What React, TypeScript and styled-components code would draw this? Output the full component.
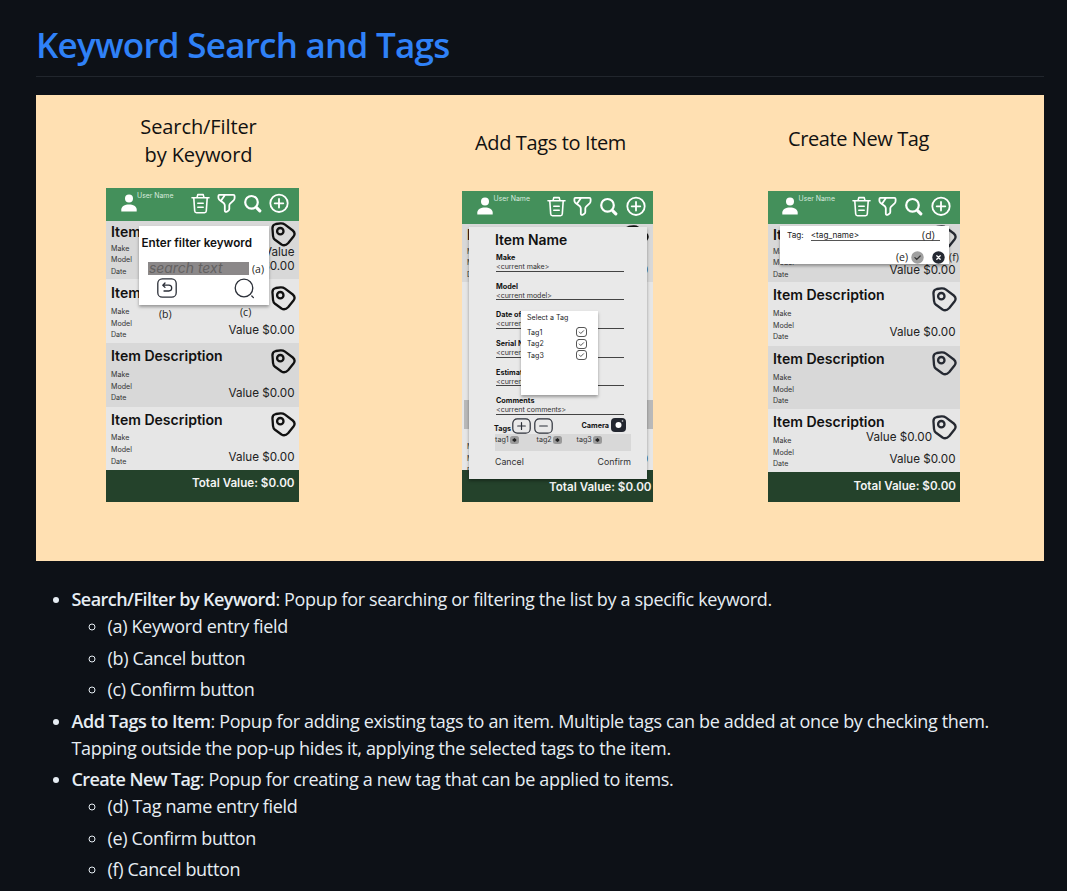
import React from "react";
import styled, { createGlobalStyle } from "styled-components";

const GlobalStyle = createGlobalStyle`
  * { box-sizing: border-box; }
  body {
    margin: 0;
    background: #0d1117;
    color: #e6edf3;
    font: 18px/27px "Segoe UI", "Open Sans", "Noto Sans", sans-serif;
    overflow: hidden;
  }
  svg { flex: none; }
`;

const Page = styled.main`
  width: 1067px;
  height: 891px;
  overflow: hidden;
  padding: 22px 23px 0 36px;
`;

const Heading = styled.h1`
  margin: 0 0 18px;
  height: 55px;
  border-bottom: 1px solid #21262d;
  color: #2f81f7;
  font-size: 35px;
  font-weight: 600;
  line-height: 45px;
  letter-spacing: -0.74px;
  white-space: nowrap;
`;

const Figure = styled.figure`
  margin: 0 0 25px;
  height: 466px;
  padding-left: 70px;
  background: #ffe0b2;
  color: #111;
  display: flex;
  align-items: flex-start;
`;

const Column = styled.div<{ $w: number; $gap: number }>`
  width: ${(p) => p.$w}px;
  margin-right: ${(p) => p.$gap}px;
  flex: none;
`;

const Caption = styled.figcaption<{ $h: number; $top: number; $shift: number; $ls: number }>`
  height: ${(p) => p.$h}px;
  padding-top: ${(p) => p.$top}px;
  padding-right: ${(p) => p.$shift}px;
  font-size: 20px;
  line-height: 27.5px;
  letter-spacing: ${(p) => p.$ls}px;
  text-align: center;
  white-space: nowrap;
`;

const Phone = styled.div<{ $h: number }>`
  position: relative;
  height: ${(p) => p.$h}px;
  background: #e6e6e6;
  font-family: Inter, sans-serif;
  display: flex;
  flex-direction: column;
`;

const AppBar = styled.div<{ $pad: number }>`
  height: 32.5px;
  flex: none;
  padding: 5px 0 0 ${(p) => p.$pad}px;
  background: #44905b;
  color: #fff;
  display: flex;
  align-items: flex-start;
`;

const UserName = styled.span`
  width: 54px;
  margin: -2px 0 0 0.5px;
  font-size: 6.9px;
  line-height: 9px;
  color: #d8eadd;
  white-space: nowrap;
`;

const BarIcons = styled.div`
  display: flex;
  gap: 7.2px;
  margin-left: -0.5px;
`;

const Row = styled.div<{ $h: number; $dark?: boolean; $left?: number; $top?: number }>`
  position: relative;
  height: ${(p) => p.$h}px;
  flex: none;
  padding: ${(p) => p.$top ?? 0}px 3.5px 0 ${(p) => p.$left ?? 5}px;
  background: ${(p) => (p.$dark ? "#d8d8d8" : "#e6e6e6")};
  display: flex;
  justify-content: space-between;
`;

const ItemTitle = styled.div<{ $lh: number }>`
  font-size: 14.05px;
  font-weight: 600;
  line-height: ${(p) => p.$lh}px;
  white-space: nowrap;
`;

const Detail = styled.div`
  font-size: 7.1px;
  line-height: 11.75px;
  color: #333;
`;

const RowSide = styled.div<{ $top: number; $w?: number }>`
  width: ${(p) => (p.$w ? p.$w + "px" : "auto")};
  padding-top: ${(p) => p.$top}px;
  display: flex;
  flex-direction: column;
  align-items: flex-end;
`;

const Value = styled.div<{ $top: number }>`
  margin-top: ${(p) => p.$top}px;
  padding-right: 1px;
  font-size: 11.65px;
  line-height: 14px;
  text-align: right;
  color: #222;
`;

const StrayValue = styled(Value)`
  position: absolute;
  right: 27px;
  top: 20.8px;
  margin: 0;
`;

const Total = styled.div<{ $right: number; $lh: number }>`
  flex: 1;
  min-height: 0;
  padding-right: ${(p) => p.$right}px;
  background: #24422b;
  color: #f4f4f4;
  font-size: 11.65px;
  font-weight: 600;
  line-height: ${(p) => p.$lh}px;
  text-align: right;
  white-space: nowrap;
`;

const Note = styled.span<{ $x?: number; $y?: number }>`
  font: 10.5px/12px "Open Sans", "Noto Sans", sans-serif;
  color: #222;
  ${(p) => p.$x !== undefined && `position: absolute; left: ${p.$x}px; top: ${p.$y}px;`}
`;

const Popup = styled.div<{ $x: number; $y: number; $w: number; $h: number }>`
  position: absolute;
  left: ${(p) => p.$x}px;
  top: ${(p) => p.$y}px;
  width: ${(p) => p.$w}px;
  height: ${(p) => p.$h}px;
  background: #fff;
  box-shadow: 0 2px 3px rgba(0, 0, 0, 0.35);
`;

const FilterTitle = styled.div`
  padding: 9.5px 0 0 2.5px;
  font-size: 11.7px;
  font-weight: 600;
  line-height: 15px;
  white-space: nowrap;
`;

const FieldLine = styled.div`
  display: flex;
  align-items: center;
  gap: 3px;
  padding: 11.5px 0 0 8.5px;
`;

const SearchField = styled.div`
  width: 101.5px;
  height: 13px;
  padding-left: 1.5px;
  background: #8b8889;
  color: #636161;
  font-size: 13.9px;
  font-style: italic;
  line-height: 13px;
`;

const FilterActions = styled.div`
  display: flex;
  justify-content: space-between;
  padding: 2.5px 14px 0 17.5px;
`;

const Sheet = styled(Popup)`
  background: #e9e9e9;
  padding-left: 26px;
`;

const SheetTitle = styled.div`
  padding-top: 4px;
  font-size: 13.9px;
  font-weight: 600;
  line-height: 18px;
`;

const FormField = styled.div`
  width: 129px;
  height: 28.55px;
  padding: 4px 0 0 1px;
`;

const FieldName = styled.div`
  font-size: 7.25px;
  font-weight: 700;
  line-height: 9px;
  white-space: nowrap;
`;

const FieldValue = styled.div`
  height: 9.5px;
  border-bottom: 1px solid #444;
  font-size: 7.05px;
  line-height: 10.5px;
  white-space: nowrap;
  color: #333;
`;

const ToolLine = styled.div`
  display: flex;
  align-items: center;
  height: 16px;
  margin-top: -2.5px;
  margin-left: -1px;
  gap: 3px;
`;

const TagsLabel = styled(FieldName)`
  width: 15px;
  padding-top: 4px;
`;

const CameraGroup = styled.div`
  display: flex;
  align-items: center;
  gap: 1.5px;
  margin-left: 25.5px;
  margin-top: -2px;
`;

const TagStrip = styled.div`
  width: 135.5px;
  height: 17px;
  background: #d8d8d8;
  display: flex;
  font-size: 7.2px;
  line-height: 12px;
  color: #333;
`;

const TagChip = styled.span<{ $w: number }>`
  width: ${(p) => p.$w}px;
  display: flex;
  gap: 1.5px;
  align-items: center;
  height: 12px;
`;

const SheetActions = styled.div`
  width: 136px;
  display: flex;
  justify-content: space-between;
  padding-top: 4px;
  font-size: 8.8px;
  line-height: 14px;
  color: #333;
`;

const TagMenu = styled(Popup)`
  padding: 1px 11px 0 6px;
  font-size: 7.1px;
  color: #222;
`;

const MenuTitle = styled.div`
  line-height: 12px;
  margin-bottom: 2px;
`;

const MenuOption = styled.div`
  display: flex;
  justify-content: space-between;
  align-items: center;
  height: 11.5px;
`;

const Blank = styled.div`
  height: 118.5px;
  flex: none;
`;

const ShadedStrip = styled.div`
  height: 29px;
  margin-left: 2px;
  flex: none;
  background: #b9b9b9;
`;

const TagEntry = styled.div`
  display: flex;
  padding: 3px 0 0 7px;
  font-size: 8.2px;
  line-height: 12px;
  color: #222;
`;

const TagInput = styled.div`
  width: 129px;
  height: 12px;
  margin-left: 7px;
  padding-right: 5px;
  border-bottom: 1px solid #555;
  display: flex;
  justify-content: space-between;
`;

const TagActions = styled.div`
  display: flex;
  align-items: center;
  padding: 9px 0 0 116px;
  height: 23px;
`;

const Gap = styled.span<{ $w: number }>`
  width: ${(p) => p.$w}px;
  flex: none;
`;

const List = styled.ul`
  margin: 0;
  padding-left: 35.5px;
  letter-spacing: -0.34px;
  & & {
    padding-left: 36px;
  }
`;

const Entry = styled.li`
  & + & {
    margin-top: 4.5px;
  }
`;

const Term = styled.strong<{ $ls: number }>`
  font-weight: 600;
  letter-spacing: ${(p) => p.$ls}px;
`;

const UserIcon = () => (
  <svg width="16" height="19" viewBox="0 0 16 19" fill="#fff">
    <circle cx="8" cy="5.6" r="4" />
    <path d="M0.3 18.4v-1.8c0-3.4 3.6-5.2 7.7-5.2s7.7 1.8 7.7 5.2v1.8z" />
  </svg>
);
const TrashIcon = () => (
  <svg width="19" height="21" viewBox="0 0 19 21" fill="none" stroke="#fff" strokeWidth="1.6" strokeLinecap="round" strokeLinejoin="round">
    <path d="M1 4.8h17M6 4.6l.8-3h5.4l.8 3M2.8 5l.9 13c.1 1.2.6 1.7 1.8 1.7h8c1.2 0 1.7-.5 1.8-1.7l.9-13M6.8 10.3h5.4M6.8 14.3h5.4" />
  </svg>
);
const FunnelIcon = () => (
  <svg width="19" height="21" viewBox="0 0 19 21" fill="none" stroke="#fff" strokeWidth="1.8" strokeLinecap="round" strokeLinejoin="round">
    <path d="M2.4 1.8h14c.8 0 1.2.4 1.2 1.2v2c0 .9-.4 1.7-1 2.3l-3.500 3.300c-.6.6-.8 1-.8 1.800v3.600c0 .8-.3 1.300-1 1.700l-1.500 1c-1.100.6-2-.1-2-1.200v-5c0-.8-.4-1.600-.9-2.200L2.300 6.700c-.6-.7-.9-1.200-.9-2V3c0-.7.4-1.200 1-1.200zM8 2L3.800 8" />
  </svg>
);
const SearchIcon = () => (
  <svg width="19" height="21" viewBox="0 0 19 21" fill="none" stroke="#fff" strokeLinecap="round">
    <circle cx="8.5" cy="9.3" r="6.3" strokeWidth="2.2" />
    <path d="M13.8 14.8l3 3" strokeWidth="3.2" />
  </svg>
);
const AddIcon = () => (
  <svg width="20" height="21" viewBox="0 0 20 21" fill="none" stroke="#fff" strokeWidth="1.8" strokeLinecap="round">
    <circle cx="10" cy="10.3" r="8.7" />
    <path d="M10 6v8.600M5.700 10.300h8.600" />
  </svg>
);
const TagIcon = ({ color = "#111" }: { color?: string }) => (
  <svg width="25" height="25" viewBox="0 0 25 25" fill="none" stroke={color} strokeWidth="2.3" strokeLinejoin="round">
    <path d="M1.500 7Q1 3 4.800 2L9.500 1.400Q12 1.200 14 2.600L21.800 8.500Q24.800 11 22.700 14.200L17.300 21Q14 24.500 10.500 22.500L4 17.800Q2.300 16.400 2 13.800Z" />
    <circle cx="9.300" cy="9.200" r="3.200" />
  </svg>
);
const BackIcon = () => (
  <svg width="20" height="20" viewBox="0 0 20 20" fill="none" stroke="#2b2f38" strokeWidth="1.3" strokeLinecap="round" strokeLinejoin="round">
    <rect x=".8" y=".8" width="18.4" height="18.4" rx="4.5" />
    <path d="M6.200 7.200h5.600a2.900 2.900 0 0 1 0 5.800H7M8 5L5.800 7.200 8 9.400" />
  </svg>
);
const LensIcon = () => (
  <svg width="21" height="21" viewBox="0 0 21 21" fill="none" stroke="#2b2f38" strokeWidth="1.3" strokeLinecap="round">
    <circle cx="10" cy="10" r="8.8" />
    <path d="M17.800 18l1.600 1.600" />
  </svg>
);
const SquareButton = ({ plus }: { plus?: boolean }) => (
  <svg width="19" height="16" viewBox="0 0 19 16" fill="none" stroke="#2b2f38" strokeWidth="1.2" strokeLinecap="round">
    <rect x=".8" y=".8" width="17.4" height="14.4" rx="4.5" />
    <path d={plus ? "M5.700 8h7.600M9.500 4.500v7" : "M5.700 8h7.600"} />
  </svg>
);
const CameraIcon = () => (
  <svg width="15" height="14" viewBox="0 0 15 14">
    <rect width="15" height="14" rx="4" fill="#22262f" />
    <circle cx="7.5" cy="7" r="3" fill="#fff" />
    <circle cx="11.500" cy="3" r=".8" fill="#ddd" />
  </svg>
);
const ChipIcon = () => (
  <svg width="9" height="8" viewBox="0 0 9 8">
    <rect width="9" height="8" rx="2.5" fill="#9a9a9a" />
    <path d="M2 4l2.800-2.200v4.400z" fill="#222" />
    <circle cx="4.8" cy="4" r="1.6" fill="#222" />
  </svg>
);
const CheckBox = () => (
  <svg width="11" height="10" viewBox="0 0 11 10" fill="none" stroke="#444" strokeWidth=".9" strokeLinecap="round">
    <rect x=".5" y=".5" width="10" height="9" rx="2.5" />
    <path d="M3.300 5l1.500 1.500 2.800-2.800" />
  </svg>
);
const RoundIcon = ({ close }: { close?: boolean }) => (
  <svg width="13" height="13" viewBox="0 0 13 13" fill="none" strokeLinecap="round">
    <circle cx="6.5" cy="6.5" r="6.2" fill={close ? "#252932" : "#a0a0a0"} />
    {close ? (
      <path d="M4.800 4.800l3.400 3.400M8.200 4.800L4.800 8.200" stroke="#fff" strokeWidth="1.3" />
    ) : (
      <path d="M3.900 6.700l1.800 1.800 3.500-3.500" stroke="#333" strokeWidth="1.2" />
    )}
  </svg>
);

const TopBar = ({ pad }: { pad: number }) => (
  <AppBar $pad={pad}>
    <UserIcon />
    <UserName>User Name</UserName>
    <BarIcons>
      <TrashIcon />
      <FunnelIcon />
      <SearchIcon />
      <AddIcon />
    </BarIcons>
  </AppBar>
);

type ItemProps = {
  first?: boolean;
  dark?: boolean;
  h?: number;
  left?: number;
  top?: number;
  narrow?: boolean;
  value?: boolean;
  color?: string;
  children?: React.ReactNode;
};
const Item = ({ first, dark, h = 63.4, left, top, narrow, value = true, color, children }: ItemProps) => (
  <Row $h={h} $dark={dark} $left={left} $top={top}>
    <div>
      <ItemTitle $lh={first ? 22 : 25.8}>Item Description</ItemTitle>
      <Detail>Make</Detail>
      <Detail>Model</Detail>
      <Detail>Date</Detail>
    </div>
    <RowSide $top={first ? 1.5 : 5.5} $w={narrow ? 38 : undefined}>
      <TagIcon color={color} />
      {value && <Value $top={narrow ? -2 : 12.5}>Value $0.00</Value>}
    </RowSide>
    {children}
  </Row>
);

const Field = ({ name, value }: { name: string; value: string }) => (
  <FormField>
    <FieldName>{name}</FieldName>
    <FieldValue>{value}</FieldValue>
  </FormField>
);

const fields = [
  ["Make", "<current make>"],
  ["Model", "<current model>"],
  ["Date of Acquisition", "<current date of acquisition>"],
  ["Serial Number", "<current serial number>"],
  ["Estimated Value", "<current value>"],
  ["Comments", "<current comments>"],
];

export default function App() {
  return (
    <Page>
      <GlobalStyle />
      <Heading>Keyword Search and Tags</Heading>
      <Figure>
        <Column $w={193} $gap={162.5}>
          <Caption $h={93} $top={18} $shift={8} $ls={-0.1}>
            Search/Filter
            <br />
            by Keyword
          </Caption>
          <Phone $h={313.5}>
            <TopBar pad={14.5} />
            <Item first dark narrow h={58.7} />
            <Item h={64} top={1} />
            <Item dark />
            <Item />
            <Total $right={4.5} $lh={27.5}>Total Value: $0.00</Total>
            <Popup $x={33} $y={38} $w={130} $h={78.5}>
              <FilterTitle>Enter filter keyword</FilterTitle>
              <FieldLine>
                <SearchField>search text</SearchField>
                <Note>(a)</Note>
              </FieldLine>
              <FilterActions>
                <BackIcon />
                <LensIcon />
              </FilterActions>
            </Popup>
            <Note $x={53} $y={119.5}>(b)</Note>
            <Note $x={134} $y={118}>(c)</Note>
          </Phone>
        </Column>
        <Column $w={191} $gap={115.5}>
          <Caption $h={96} $top={34} $shift={13} $ls={-0.37}>Add Tags to Item</Caption>
          <Phone $h={311}>
            <TopBar pad={15.5} />
            <Item first dark h={58.3} left={5.5} />
            <Blank />
            <ShadedStrip />
            <Row $h={41} $left={5.5}>
              <div>
                <Detail>&nbsp;</Detail>
                <Detail>Make</Detail>
                <Detail>Model</Detail>
                <Detail>Date</Detail>
              </div>
              <RowSide $top={0}>
                <Value $top={23}>Value $0.00</Value>
              </RowSide>
            </Row>
            <Total $right={1} $lh={34.5}>Total Value: $0.00</Total>
            <Sheet $x={7.5} $y={36.4} $w={177.5} $h={251.500}>
              <SheetTitle>Item Name</SheetTitle>
              {fields.map(([name, value]) => (
                <Field key={name} name={name} value={value} />
              ))}
              <ToolLine>
                <TagsLabel>Tags</TagsLabel>
                <SquareButton plus />
                <SquareButton />
                <CameraGroup>
                  <FieldName>Camera</FieldName>
                  <CameraIcon />
                </CameraGroup>
              </ToolLine>
              <TagStrip>
                <TagChip $w={41.5}>tag1 <ChipIcon /></TagChip>
                <TagChip $w={40}>tag2 <ChipIcon /></TagChip>
                <TagChip $w={40}>tag3 <ChipIcon /></TagChip>
              </TagStrip>
              <SheetActions>
                <span>Cancel</span>
                <span>Confirm</span>
              </SheetActions>
            </Sheet>
            <TagMenu $x={59.5} $y={120.4} $w={77} $h={84}>
              <MenuTitle>Select a Tag</MenuTitle>
              {["Tag1", "Tag2", "Tag3"].map((tag) => (
                <MenuOption key={tag}>
                  {tag}
                  <CheckBox />
                </MenuOption>
              ))}
            </TagMenu>
          </Phone>
        </Column>
        <Column $w={192} $gap={0}>
          <Caption $h={96} $top={30} $shift={11} $ls={-0.4}>Create New Tag</Caption>
          <Phone $h={310.5}>
            <TopBar pad={14} />
            <Item first dark h={58.2} color="#252932" />
            <Item h={64.3} top={0.3} color="#252932" />
            <Item dark h={63.2} value={false} color="#252932" />
            <Item h={63.2} color="#252932">
              <StrayValue $top={0}>Value $0.00</StrayValue>
            </Item>
            <Total $right={4} $lh={28}>Total Value: $0.00</Total>
            <Popup $x={12} $y={35} $w={169} $h={38}>
              <TagEntry>
                Tag:
                <TagInput>
                  {"<tag_name>"}
                  <Note>(d)</Note>
                </TagInput>
              </TagEntry>
              <TagActions>
                <Note>(e)</Note>
                <Gap $w={2.5} />
                <RoundIcon />
                <Gap $w={8.5} />
                <RoundIcon close />
                <Gap $w={4} />
                <Note>(f)</Note>
              </TagActions>
            </Popup>
          </Phone>
        </Column>
      </Figure>
      <List>
        <Entry>
          <Term $ls={-0.55}>Search/Filter by Keyword</Term>: Popup for searching or filtering the list by a specific keyword.
          <List>
            <Entry>(a) Keyword entry field</Entry>
            <Entry>(b) Cancel button</Entry>
            <Entry>(c) Confirm button</Entry>
          </List>
        </Entry>
        <Entry>
          <Term $ls={-0.44}>Add Tags to Item</Term>: Popup for adding existing tags to an item. Multiple tags can be added at once by checking them.
          <br />
          Tapping outside the pop-up hides it, applying the selected tags to the item.
        </Entry>
        <Entry>
          <Term $ls={-0.6}>Create New Tag</Term>: Popup for creating a new tag that can be applied to items.
          <List>
            <Entry>(d) Tag name entry field</Entry>
            <Entry>(e) Confirm button</Entry>
            <Entry>(f) Cancel button</Entry>
          </List>
        </Entry>
      </List>
    </Page>
  );
}
